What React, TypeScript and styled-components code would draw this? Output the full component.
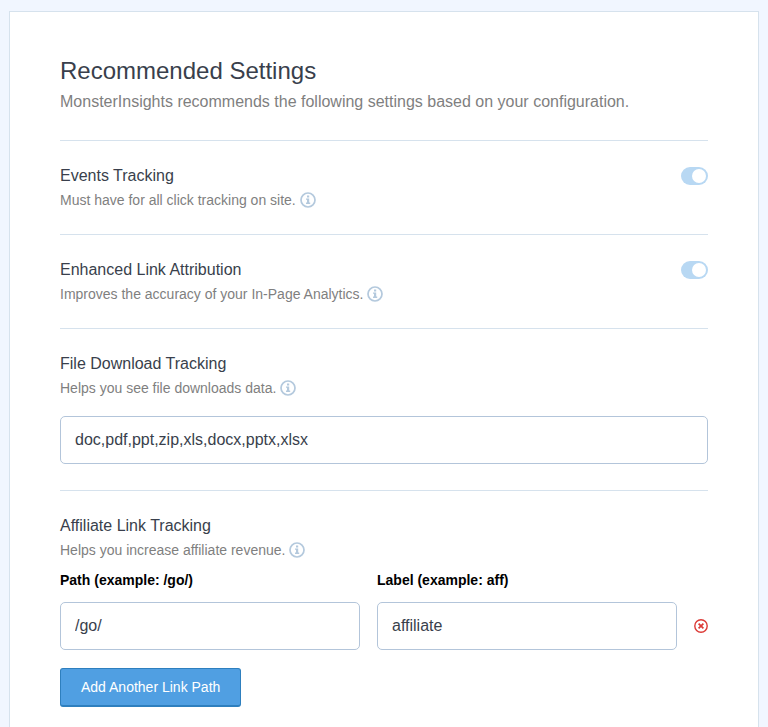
import React, { useState } from "react";
import styled, { createGlobalStyle } from "styled-components";

const GlobalStyle = createGlobalStyle`
  *, *::before, *::after { box-sizing: border-box; }
  body {
    margin: 0;
    background: #f1f6ff;
    font-family: "Liberation Sans", Arial, Helvetica, sans-serif;
    color: #393f4c;
  }
`;

const Page = styled.div`
  display: flex;
  min-height: 100vh;
  padding: 11px 9px 0;
`;

const Card = styled.main`
  flex: 1;
  min-width: 0;
  padding: 44px 50px 0;
  background: #fff;
  border: 1px solid #d6e2ed;
  border-bottom: 0;
`;

const Header = styled.header`
  padding-bottom: 26px;
`;

const Title = styled.h1`
  margin: 0;
  font-size: 24px;
  font-weight: 400;
  line-height: 30px;
`;

const Intro = styled.p`
  margin: 0;
  padding-top: 4px;
  font-size: 16px;
  line-height: 24px;
  color: #7f7f7f;
`;

const Setting = styled.section`
  display: flex;
  flex-direction: column;
  border-top: 1px solid #d6e2ed;
  padding: 23px 0 22px;
`;

const FieldSetting = styled(Setting)`
  padding-bottom: 26px;
`;

const LinkSetting = styled(Setting)`
  padding-bottom: 20px;
`;

const SettingHead = styled.div`
  display: flex;
  justify-content: space-between;
  align-items: flex-start;
`;

const SettingTitle = styled.label`
  display: block;
  font-size: 16px;
  line-height: 24px;
`;

const GroupTitle = styled.h2`
  margin: 0;
  font-size: 16px;
  font-weight: 400;
  line-height: 24px;
`;

const Description = styled.p`
  display: flex;
  align-items: center;
  gap: 4px;
  margin: 0;
  font-size: 14px;
  line-height: 24px;
  color: #7f7f7f;
`;

const Icon = styled.svg`
  display: block;
  flex: none;
`;

const Toggle = styled.input`
  appearance: none;
  display: flex;
  flex: none;
  width: 27px;
  height: 18px;
  margin: 3px 0 0;
  padding: 2px;
  border-radius: 9px;
  background: #d6dde6;
  cursor: pointer;

  &::before {
    content: "";
    width: 14px;
    height: 14px;
    border-radius: 50%;
    background: #fff;
  }
  &:checked {
    justify-content: flex-end;
    background: #b8d8f3;
  }
`;

const TextInput = styled.input`
  width: 100%;
  min-width: 0;
  height: 48px;
  padding: 0 14px;
  border: 1px solid #b3c5da;
  border-radius: 5px;
  background: #fff;
  color: #393f4c;
  font-family: inherit;
  font-size: 16px;
`;

const FileInput = styled(TextInput)`
  margin-top: 16px;
`;

const LinkGrid = styled.div`
  display: grid;
  grid-template-columns: 1fr 1fr 14px;
  gap: 11px 17px;
  align-items: center;
  padding-top: 7px;
`;

const PathInput = styled(TextInput)`
  grid-column: 1;
`;

const ColumnLabel = styled.label`
  font-size: 14px;
  font-weight: 700;
  line-height: 22px;
  color: #000;
`;

const RemoveButton = styled.button`
  padding: 0;
  border: 0;
  background: none;
  cursor: pointer;
`;

const AddButton = styled.button`
  align-self: flex-start;
  height: 39px;
  margin-top: 18px;
  padding: 0 20px;
  border: 1px solid #2e7fbe;
  border-bottom-width: 2px;
  border-radius: 3px;
  background: #509fe2;
  color: #fff;
  font-family: inherit;
  font-size: 14px;
  cursor: pointer;
`;

function InfoIcon() {
  return (
    <Icon width="16" height="16" viewBox="0 0 16 16" aria-hidden="true">
      <circle cx="8" cy="8" r="7" fill="none" stroke="#b4c9dd" strokeWidth="1.7" />
      <path
        d="M7 3.6h2.2v1.9H7zM6 6.4h3.2v4.2h1V12H6v-1.4h1V7.8H6z"
        fill="#b4c9dd"
      />
    </Icon>
  );
}

function RemoveIcon() {
  return (
    <Icon width="14" height="14" viewBox="0 0 14 14" aria-hidden="true">
      <circle cx="7" cy="7" r="6.2" fill="none" stroke="#dc3a36" strokeWidth="1.4" />
      <path d="M4.6 4.6l4.8 4.8M9.4 4.6L4.6 9.4" stroke="#dc3a36" strokeWidth="1.7" />
    </Icon>
  );
}

interface ToggleSettingProps {
  id: string;
  title: string;
  description: string;
}

function ToggleSetting({ id, title, description }: ToggleSettingProps) {
  const [on, setOn] = useState(true);
  return (
    <Setting>
      <SettingHead>
        <div>
          <SettingTitle htmlFor={id}>{title}</SettingTitle>
          <Description>
            {description}
            <InfoIcon />
          </Description>
        </div>
        <Toggle id={id} type="checkbox" checked={on} onChange={(e) => setOn(e.target.checked)} />
      </SettingHead>
    </Setting>
  );
}

interface LinkPath {
  id: number;
  path: string;
  label: string;
}

export default function App() {
  const [links, setLinks] = useState<LinkPath[]>([{ id: 1, path: "/go/", label: "affiliate" }]);

  const update = (id: number, change: Partial<LinkPath>) =>
    setLinks(links.map((link) => (link.id === id ? { ...link, ...change } : link)));
  const remove = (id: number) => setLinks(links.filter((link) => link.id !== id));
  const add = () => setLinks([...links, { id: Date.now(), path: "", label: "" }]);

  return (
    <>
      <GlobalStyle />
      <Page>
        <Card>
          <Header>
            <Title>Recommended Settings</Title>
            <Intro>MonsterInsights recommends the following settings based on your configuration.</Intro>
          </Header>
          <ToggleSetting
            id="events"
            title="Events Tracking"
            description="Must have for all click tracking on site."
          />
          <ToggleSetting
            id="attribution"
            title="Enhanced Link Attribution"
            description="Improves the accuracy of your In-Page Analytics."
          />
          <FieldSetting>
            <SettingTitle htmlFor="downloads">File Download Tracking</SettingTitle>
            <Description>
              Helps you see file downloads data.
              <InfoIcon />
            </Description>
            <FileInput id="downloads" type="text" defaultValue="doc,pdf,ppt,zip,xls,docx,pptx,xlsx" />
          </FieldSetting>
          <LinkSetting>
            <GroupTitle>Affiliate Link Tracking</GroupTitle>
            <Description>
              Helps you increase affiliate revenue.
              <InfoIcon />
            </Description>
            <LinkGrid>
              <ColumnLabel htmlFor="path-0">Path (example: /go/)</ColumnLabel>
              <ColumnLabel htmlFor="label-0">Label (example: aff)</ColumnLabel>
              {links.map((link, index) => (
                <React.Fragment key={link.id}>
                  <PathInput
                    id={`path-${index}`}
                    type="text"
                    aria-label={index > 0 ? "Path" : undefined}
                    value={link.path}
                    onChange={(e) => update(link.id, { path: e.target.value })}
                  />
                  <TextInput
                    id={`label-${index}`}
                    type="text"
                    aria-label={index > 0 ? "Label" : undefined}
                    value={link.label}
                    onChange={(e) => update(link.id, { label: e.target.value })}
                  />
                  <RemoveButton type="button" aria-label="Remove link path" onClick={() => remove(link.id)}>
                    <RemoveIcon />
                  </RemoveButton>
                </React.Fragment>
              ))}
            </LinkGrid>
            <AddButton type="button" onClick={add}>
              Add Another Link Path
            </AddButton>
          </LinkSetting>
        </Card>
      </Page>
    </>
  );
}
